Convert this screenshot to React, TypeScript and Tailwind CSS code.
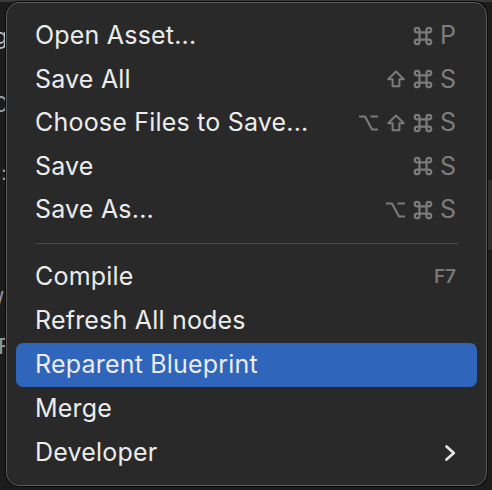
import React from "react";

type Key = "cmd" | "shift" | "opt" | string;
type Item = { label: string; keys?: Key[]; fkey?: string; highlight?: boolean; sub?: boolean };

const group1: Item[] = [
  { label: "Open Asset...", keys: ["cmd", "P"] },
  { label: "Save All", keys: ["shift", "cmd", "S"] },
  { label: "Choose Files to Save...", keys: ["opt", "shift", "cmd", "S"] },
  { label: "Save", keys: ["cmd", "S"] },
  { label: "Save As...", keys: ["opt", "cmd", "S"] },
];

const group2: Item[] = [
  { label: "Compile", fkey: "F7" },
  { label: "Refresh All nodes" },
  { label: "Reparent Blueprint", highlight: true },
  { label: "Merge" },
  { label: "Developer", sub: true },
];

const stroke = "#7b7b7b";

function KeyGlyph({ k }: { k: Key }) {
  if (k === "cmd") {
    return (
      <svg width="20" height="20" viewBox="1.5 1.5 17 17" aria-label="⌘">
        <path
          d="M7 7H13V13H7Z M7 7V5A2 2 0 1 0 5 7H7 M13 7V5A2 2 0 1 1 15 7H13 M13 13V15A2 2 0 1 0 15 13H13 M7 13V15A2 2 0 1 1 5 13H7"
          fill="none"
          stroke={stroke}
          strokeWidth="1.9"
          strokeLinejoin="round"
        />
      </svg>
    );
  }
  if (k === "shift") {
    return (
      <svg width="20" height="20" viewBox="0 0 20 20" aria-label="⇧">
        <path
          d="M10 2.5 L17.8 10.3 H13.4 V17.3 H6.6 V10.3 H2.2 Z"
          fill="none"
          stroke={stroke}
          strokeWidth="2"
          strokeLinejoin="round"
        />
      </svg>
    );
  }
  if (k === "opt") {
    return (
      <svg width="21" height="20" viewBox="0 0 21 20" aria-label="⌥">
        <path
          d="M1 3.5 H7 L14 16.5 H20 M12.5 3.5 H20"
          fill="none"
          stroke={stroke}
          strokeWidth="2.1"
          strokeLinejoin="round"
        />
      </svg>
    );
  }
  return <span className="text-[25px] leading-none text-[#7d7d7d]">{k}</span>;
}

function Row({ item, h }: { item: Item; h: string }) {
  return (
    <div
      className={`${h} flex items-center justify-between pl-[19px] pr-[21px] rounded-[7px] ${
        item.highlight ? "bg-[#2f65ba]" : ""
      }`}
    >
      <span className="text-[25px] leading-none text-[#ececec] tracking-[0.2px]">{item.label}</span>
      {item.fkey && (
        <span className="text-[19px] leading-none font-semibold text-[#787878]">{item.fkey}</span>
      )}
      {item.keys && (
        <span className="flex items-center gap-[7px]">
          {item.keys.map((k, i) => (
            <KeyGlyph key={i} k={k} />
          ))}
        </span>
      )}
      {item.sub && (
        <svg width="12" height="18" viewBox="0 0 12 18">
          <path
            d="M2.5 2.5 L9.8 9 L2.5 15.5"
            fill="none"
            stroke="#e6e6e6"
            strokeWidth="2.7"
            strokeLinecap="round"
            strokeLinejoin="round"
          />
        </svg>
      )}
    </div>
  );
}

export default function App() {
  return (
    <div
      className="relative w-[492px] h-[490px] bg-[#1c1c1d] overflow-hidden"
      style={{ fontFamily: "Inter, 'Noto Sans', sans-serif" }}
    >
      {/* background fragments behind the menu */}
      <div className="absolute left-0 top-0 w-full h-[2px] bg-[#3a3a3a]" />
      <span className="absolute left-[-6px] top-[20px] text-[22px] text-[#bdbdbd]">g</span>
      <span className="absolute left-[-8px] top-[88px] text-[22px] text-[#9a9a9a]">C</span>
      <span className="absolute left-[1px] top-[158px] text-[20px] text-[#9a9a9a]">:</span>
      <span className="absolute left-[-4px] top-[284px] text-[22px] text-[#9a9a9a]">/</span>
      <span className="absolute left-[-2px] top-[330px] text-[22px] text-[#9a9a9a]">F</span>
      <div className="absolute right-0 top-[180px] w-[4px] h-[70px] bg-[#2e2e2e]" />

      <div className="relative ml-[6px] mt-[2px] w-[481px] h-[484px] rounded-[13px] border border-[#5a5a5a] bg-[#29292a] shadow-[0_0_0_1px_#0a0a0a] px-[9px] pt-[11px]">
        {group1.map((it) => (
          <Row key={it.label} item={it} h="h-[43.5px]" />
        ))}
        <div className="h-[23px] flex items-center px-[19px]">
          <div className="h-px w-full bg-[#4a4a4a]" />
        </div>
        {group2.map((it) => (
          <Row key={it.label} item={it} h="h-[44px]" />
        ))}
      </div>
    </div>
  );
}
